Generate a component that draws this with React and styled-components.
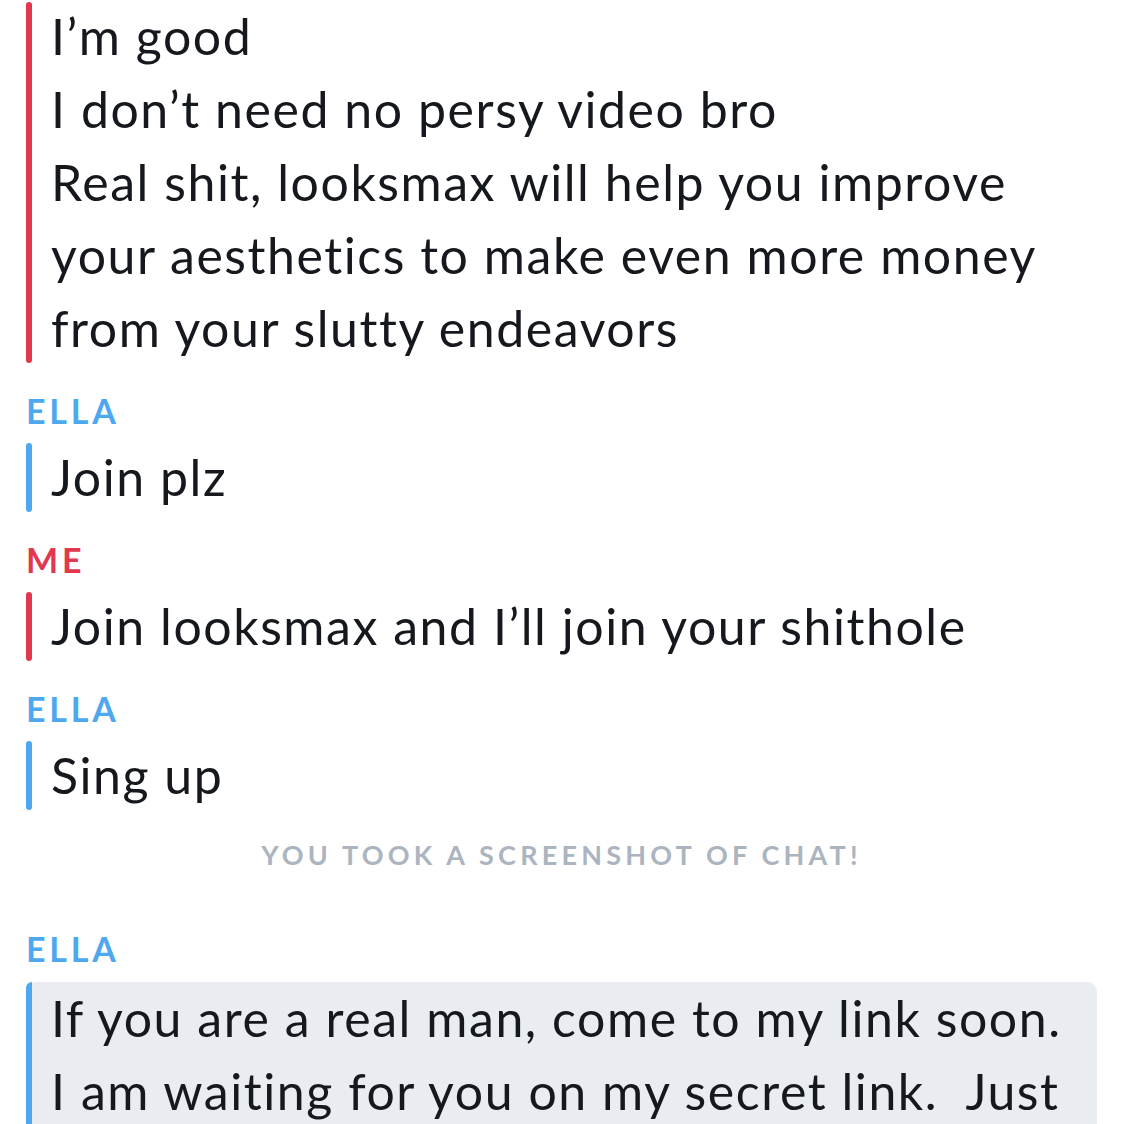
import React from "react";
import styled, { createGlobalStyle } from "styled-components";

const GlobalStyle = createGlobalStyle`
	html, body {
		margin: 0;
		padding: 0;
		background: #ffffff;
	}
	body {
		font-family: Lato, "Noto Sans", sans-serif;
		color: #15181c;
	}
`;

const Screen = styled.div`
	width: 1124px;
	height: 1124px;
	overflow: hidden;
	padding: 0 27px 0 26px;
	box-sizing: border-box;
	display: flex;
	flex-direction: column;
`;

const Group = styled.div`
	display: flex;
	flex-direction: column;
	padding-top: ${(p) => p.$top ?? 24}px;
`;

const Label = styled.div`
	font-size: 34px;
	font-weight: 700;
	letter-spacing: 3.8px;
	line-height: 44px;
	margin-bottom: 8px;
	color: ${(p) => (p.$me ? "#e2384f" : "#4ea8ef")};
`;

const Message = styled.div`
	display: flex;
	align-items: stretch;
	border-radius: 10px;
	background: ${(p) => (p.$saved ? "#e9edf1" : "transparent")};
	min-height: ${(p) => (p.$saved ? "200px" : "auto")};
	margin-top: ${(p) => (p.$saved ? "3px" : "0")};
`;

const Bar = styled.div`
	flex: 0 0 6px;
	background: ${(p) => (p.$me ? "#e2384f" : "#4ea8ef")};
	border-radius: ${(p) => (p.$saved ? "10px 0 0 10px" : "3px")};
	margin: ${(p) => (p.$saved ? "0" : "2px 0")};
`;

const Body = styled.div`
	padding-left: 19px;
	font-size: 50px;
	letter-spacing: 1.55px;
	line-height: 73px;
	white-space: pre;
`;

const Notice = styled.div`
	margin-top: 25px;
	text-align: center;
	font-size: 27px;
	font-weight: 700;
	letter-spacing: 4.2px;
	line-height: 36px;
	color: #abb4bf;
`;

const chat = [
	{
		me: true,
		top: 0,
		lines: [
			"I’m good",
			"I don’t need no persy video bro",
			"Real shit, looksmax will help you improve",
			"your aesthetics to make even more money",
			"from your slutty endeavors",
		],
	},
	{ name: "ELLA", lines: ["Join plz"] },
	{ name: "ME", me: true, lines: ["Join looksmax and I’ll join your shithole"] },
	{ name: "ELLA", lines: ["Sing up"] },
];

function App() {
	return (
		<>
			<GlobalStyle />
			<Screen>
				{chat.map((m, i) => (
					<Group key={i} $top={m.top}>
						{m.name && <Label $me={m.me}>{m.name}</Label>}
						<Message>
							<Bar $me={m.me} />
							<Body>{m.lines.join("\n")}</Body>
						</Message>
					</Group>
				))}
				<Notice>YOU TOOK A SCREENSHOT OF CHAT!</Notice>
				<Group $top={54}>
					<Label>ELLA</Label>
					<Message $saved>
						<Bar $saved />
						<Body>
							{"If you are a real man, come to my link soon.\nI am waiting for you on my secret link.  Just"}
						</Body>
					</Message>
				</Group>
			</Screen>
		</>
	);
}

export default App;
